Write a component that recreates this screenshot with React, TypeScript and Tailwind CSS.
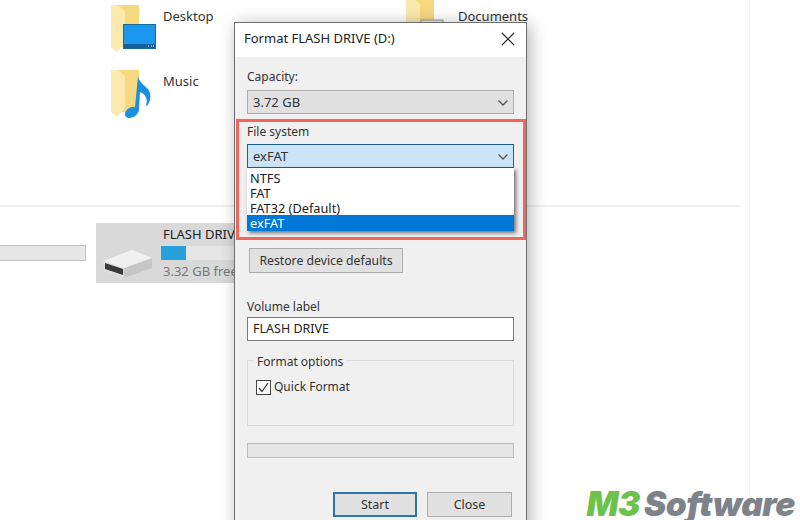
import { ReactNode } from "react";

function Folder({ children }: { children?: ReactNode }) {
  return (
    <svg width="46" height="50" viewBox="0 0 46 50" className="shrink-0">
      <path d="M6 2h23v42H6z" fill="#f6d97f" />
      <path d="M1 2l7 0 7 6 0 32-8 9-6-5z" fill="#fbe9ae" />
      {children}
    </svg>
  );
}

function Chevron() {
  return (
    <svg width="12" height="8" viewBox="0 0 12 8" className="shrink-0">
      <path d="M1.5 1.5L6 6l4.5-4.5" fill="none" stroke="#555" strokeWidth="1.3" />
    </svg>
  );
}

function DriveIcon() {
  return (
    <svg width="50" height="28" viewBox="0 0 50 28" className="shrink-0">
      <path d="M0 11l21 7v10L1 21z" fill="#dedede" />
      <path d="M2 13l18 6v6L2 19z" fill="#3a3a3a" />
      <path d="M21 18l28-10v10L21 28z" fill="#c6c6c6" />
      <path d="M0 11L29 0l20 8-28 10z" fill="#f0f0f0" />
    </svg>
  );
}

export default function App() {
  return (
    <div className="relative w-[800px] h-[520px] overflow-hidden bg-white font-['Noto_Sans',sans-serif] text-[13px] text-[#333]">
      {/* explorer behind the dialog */}
      <div className="w-[750px] h-full border-r border-[#f3f3f3]">
        <div className="w-[740px] h-[207px] border-b-2 border-[#efefef] pl-[110px] pt-[3px]">
          <div className="grid grid-cols-[295px_1fr] gap-y-[15px]">
            <div className="flex h-[50px] gap-[7px]">
              <Folder>
                <rect x="13.5" y="21.5" width="32" height="24" fill="#1b97f0" stroke="#17699f" />
                <rect x="14" y="41" width="31" height="4" fill="#14609a" />
                <path d="M38 43h1M41 43h1M43 43h1" stroke="#fff" />
              </Folder>
              <span className="mt-[3px] leading-[20px]">Desktop</span>
            </div>
            <div className="flex h-[50px] gap-[7px] -mt-[7px]">
              <Folder>
                <rect x="16" y="24" width="22" height="26" fill="#e4e4e4" stroke="#999" />
              </Folder>
              <span className="mt-[10px] leading-[20px]">Documents</span>
            </div>
            <div className="flex h-[50px] gap-[7px]">
              <Folder>
                <path
                  d="M28 8c1 8 10 10 12 17 1 5 0 9-3 13l-1-1c2-5 0-11-6-13l-1 17c0 5-5 9-10 9-4 0-5-4-3-7 2-3 6-5 9-4z"
                  fill="#1b8fe0"
                />
              </Folder>
              <span className="mt-[3px] leading-[20px]">Music</span>
            </div>
          </div>
        </div>

        <div className="flex items-start pt-[16px]">
          <div className="w-[86px] h-[16px] mt-[22px] bg-[#e6e6e6] border border-[#c4c4c4] border-l-0" />
          <div className="flex w-[140px] h-[60px] ml-[10px] bg-[#d9d9d9]">
            <div className="pl-[7px] pt-[27px]">
              <DriveIcon />
            </div>
            <div className="pl-[8px] pt-[2px] overflow-hidden whitespace-nowrap">
              <div className="pl-[2px] leading-[18px] text-[#222]">FLASH DRIVE (D:)</div>
              <div className="w-[120px] h-[14px] mt-[3px] bg-[#e6e6e6]">
                <div className="w-[25px] h-full bg-[#26a0da]" />
              </div>
              <div className="pl-[2px] mt-[2px] leading-[18px] text-[#777]">3.32 GB free of 3.72 GB</div>
            </div>
          </div>
          <div className="ml-[193px] pt-[10px] leading-[18px] text-[#444] whitespace-nowrap">Local Drive (E:)</div>
        </div>
      </div>

      {/* format dialog */}
      <div className="absolute left-[234px] top-[22px] w-[293px] h-[520px] bg-[#f0f0f0] border border-[#6e6e6e] shadow-[3px_2px_16px_rgba(0,0,0,0.3)]">
        <div className="flex items-center justify-between h-[34px] bg-white pl-[9px] pr-[11px] pb-[2px] text-[#222]">
          <span>Format FLASH DRIVE (D:)</span>
          <svg width="14" height="14" viewBox="0 0 14 14">
            <path d="M1 1l12 12M13 1L1 13" stroke="#222" strokeWidth="1.2" />
          </svg>
        </div>

        <div className="relative px-[12px] pt-[11px]">
          <div className="leading-[18px] text-[12px]">Capacity:</div>
          <div className="flex items-center justify-between h-[24px] mt-[4px] pt-[1px] bg-[#e1e1e1] border border-[#adadad] pl-[5px] pr-[4px]">
            <span>3.72 GB</span>
            <Chevron />
          </div>

          <div className="mt-[9px] leading-[18px] text-[12px]">File system</div>
          <div className="relative mt-[3px]">
            <div className="flex items-center justify-between h-[24px] pt-[1px] bg-[#cce4f7] border border-[#1f5f8f] pl-[5px] pr-[4px]">
              <span>exFAT</span>
              <Chevron />
            </div>
            <div className="absolute left-0 right-0 top-[24px] z-10 pt-[2px] bg-white shadow-[2px_2px_4px_rgba(0,0,0,0.55)] leading-[15px] text-[12.75px]">
              <div className="pl-[3px] pt-[1px] -mb-[1px] text-[#222]">NTFS</div>
              <div className="pl-[3px] pt-[1px] -mb-[1px] text-[#222]">FAT</div>
              <div className="pl-[3px] pt-[1px] -mb-[1px] text-[#222]">FAT32 (Default)</div>
              <div className="pl-[3px] pt-[1px] bg-[#0078d7] text-white">exFAT</div>
            </div>
          </div>

          <div className="w-[154px] h-[25px] mt-[80px] ml-[2px] pt-[2px] flex items-center justify-center bg-[#e1e1e1] border border-[#adadad] text-[12.25px]">
            Restore device defaults
          </div>

          <div className="mt-[25px] leading-[18px] text-[12px]">Volume label</div>
          <div className="flex items-center h-[24px] mt-[1px] bg-white border border-[#7a7a7a] pl-[5px] text-[12.5px] text-[#222]">
            FLASH DRIVE
          </div>

          <div className="relative h-[66px] mt-[19px] border border-[#dcdcdc]">
            <span className="absolute left-[5px] -top-[8px] px-[4px] bg-[#f0f0f0] leading-[18px] text-[12px]">Format options</span>
            <div className="flex items-center gap-[3px] pl-[8px] pt-[17px] text-[12px]">
              <div className="flex items-center justify-center w-[15px] h-[15px] bg-white border border-[#444]">
                <svg width="13" height="13" viewBox="0 0 13 13">
                  <path d="M2 7l3 3.5L11 2" fill="none" stroke="#333" strokeWidth="1.2" />
                </svg>
              </div>
              <span>Quick Format</span>
            </div>
          </div>

          <div className="h-[15px] mt-[17px] bg-[#e6e6e6] border border-[#bcbcbc]" />

          <div className="flex justify-end gap-[10px] mt-[34px] pr-[2px] text-[12.5px]">
            <div className="flex items-center justify-center w-[84px] h-[25px] pt-[1px] bg-[#e1e1e1] border-2 border-[#2b74b0]">Start</div>
            <div className="flex items-center justify-center w-[85px] h-[25px] pt-[1px] bg-[#e1e1e1] border border-[#adadad]">Close</div>
          </div>
        </div>
      </div>

      {/* red callout */}
      <div className="absolute left-[236px] top-[119px] w-[290px] h-[121px] border-[3px] border-[#f2675c] z-20" />

      {/* watermark */}
      <div className="absolute right-[5px] bottom-0 font-['Inter',sans-serif] italic font-black text-[33.5px] leading-[32px] tracking-[-0.5px] whitespace-nowrap z-20">
        <span className="text-[#6cc24a]">M3</span>
        <span className="text-[#7d8388] ml-[4px]">Software</span>
      </div>
    </div>
  );
}
